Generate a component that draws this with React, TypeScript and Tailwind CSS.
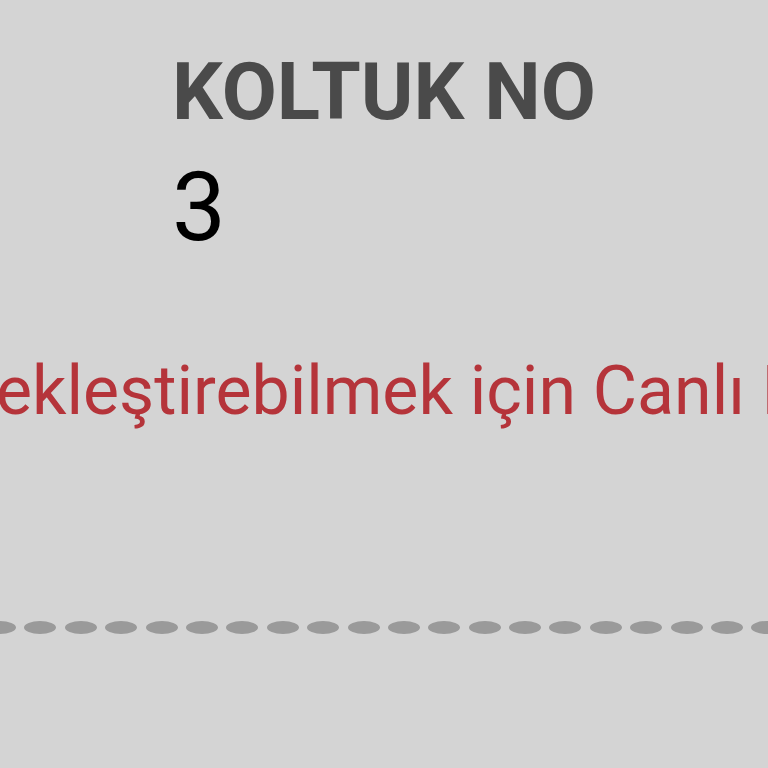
import React from "react";

export default function App() {
  const dots = Array.from({ length: 21 });
  return (
    <div
      className="w-[768px] h-[768px] overflow-hidden bg-[#d4d4d4] flex flex-col"
      style={{ fontFamily: "Roboto, 'Noto Sans', sans-serif" }}
    >
      <div className="pl-[172px] pt-[52px] flex flex-col">
        <div className="text-[80px] leading-none font-bold text-[#4a4a4a] whitespace-nowrap">
          KOLTUK NO
        </div>
        <div className="mt-[27px] text-[96px] leading-none text-black">3</div>
      </div>
      <div className="mt-[102px] ml-[-4px] text-[68px] leading-none text-[#b5343a] whitespace-nowrap">
        ekleştirebilmek için Canlı Destek ile iletişime geçiniz.
      </div>
      <div className="mt-[196px] ml-[-16px] flex gap-[8.4px] h-[12px]">
        {dots.map((_, i) => (
          <div key={i} className="shrink-0 w-[32px] h-[13px] rounded-[50%] bg-[#9a9a9a]" />
        ))}
      </div>
    </div>
  );
}
